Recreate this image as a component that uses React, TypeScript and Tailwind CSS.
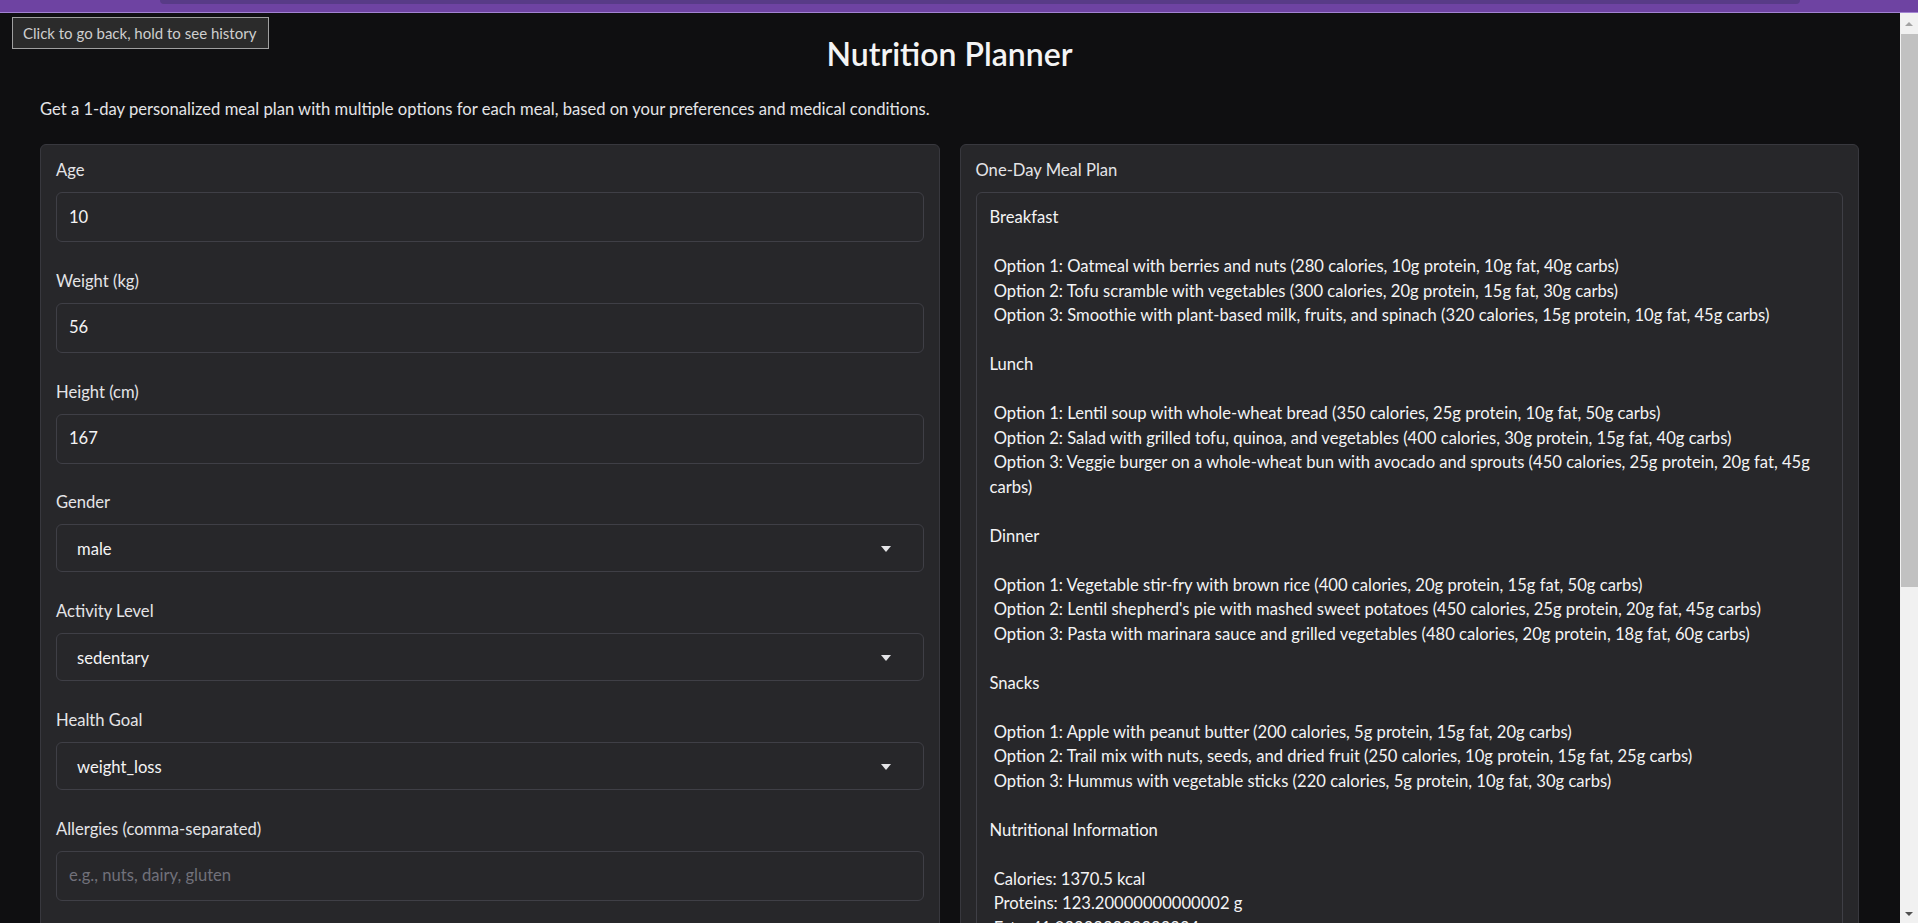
import React from 'react';

interface FieldProps {
    label: string;
    value?: string;
    placeholder?: string;
}

const mealPlanText = `Breakfast

 Option 1: Oatmeal with berries and nuts (280 calories, 10g protein, 10g fat, 40g carbs)
 Option 2: Tofu scramble with vegetables (300 calories, 20g protein, 15g fat, 30g carbs)
 Option 3: Smoothie with plant-based milk, fruits, and spinach (320 calories, 15g protein, 10g fat, 45g carbs)

Lunch

 Option 1: Lentil soup with whole-wheat bread (350 calories, 25g protein, 10g fat, 50g carbs)
 Option 2: Salad with grilled tofu, quinoa, and vegetables (400 calories, 30g protein, 15g fat, 40g carbs)
 Option 3: Veggie burger on a whole-wheat bun with avocado and sprouts (450 calories, 25g protein, 20g fat, 45g carbs)

Dinner

 Option 1: Vegetable stir-fry with brown rice (400 calories, 20g protein, 15g fat, 50g carbs)
 Option 2: Lentil shepherd's pie with mashed sweet potatoes (450 calories, 25g protein, 20g fat, 45g carbs)
 Option 3: Pasta with marinara sauce and grilled vegetables (480 calories, 20g protein, 18g fat, 60g carbs)

Snacks

 Option 1: Apple with peanut butter (200 calories, 5g protein, 15g fat, 20g carbs)
 Option 2: Trail mix with nuts, seeds, and dried fruit (250 calories, 10g protein, 15g fat, 25g carbs)
 Option 3: Hummus with vegetable sticks (220 calories, 5g protein, 10g fat, 30g carbs)

Nutritional Information

 Calories: 1370.5 kcal
 Proteins: 123.20000000000002 g
 Fats: 41.099999999999994 g
 Carbohydrates: 145.3 g`;

// plain text box (number / text inputs)
const TextField: React.FC<FieldProps> = ({ label, value, placeholder }) => (
    <div>
        <p className="text-[16.6px] leading-5 text-[#e4e4e7] mb-3">{label}</p>
        <div className="h-[50px] rounded-md border border-[#3f3f46] bg-[#27272a] px-3 flex items-center text-[16.6px]">
            {value ? (
                <span className="text-[#f4f4f5]">{value}</span>
            ) : (
                <span className="text-[#71717a]">{placeholder}</span>
            )}
        </div>
    </div>
);

const SelectField: React.FC<FieldProps> = ({ label, value }) => (
    <div>
        <p className="text-[16.6px] leading-5 text-[#e4e4e7] mb-3">{label}</p>
        <div className="h-[48px] rounded-md border border-[#3f3f46] bg-[#27272a] pl-5 pr-[32px] pt-[2px] flex items-center justify-between text-[16.6px]">
            <span className="text-[#f4f4f5]">{value}</span>
            <span className="w-0 h-0 border-l-[5px] border-r-[5px] border-t-[6px] border-l-transparent border-r-transparent border-t-[#e4e4e7]" />
        </div>
    </div>
);

const Scrollbar: React.FC = () => (
    <div className="w-[18px] flex flex-col bg-[#f1f1f1]">
        <div className="h-[21px] flex items-center justify-center">
            <span className="w-0 h-0 border-l-[4px] border-r-[4px] border-b-[4px] border-l-transparent border-r-transparent border-b-[#a3a3a3]" />
        </div>
        <div className="h-[553px] ml-[1px] bg-[#c1c1c1]" />
        <div className="flex-1" />
        <div className="h-[18px] flex items-center justify-center">
            <span className="w-0 h-0 border-l-[4px] border-r-[4px] border-t-[4px] border-l-transparent border-r-transparent border-t-[#505050]" />
        </div>
    </div>
);

export default function App() {
    return (
        <div className="h-screen w-full overflow-hidden flex flex-col bg-[#0f0f11] font-['Lato',sans-serif]">
            {/* browser strip */}
            <div className="relative h-[13px] shrink-0 bg-[#6e43a2] border-b border-[#a283d2]">
                <div className="absolute left-[160px] right-[118px] top-0 h-[4px] rounded-b-lg bg-[#583b87]" />
            </div>

            <div className="flex flex-1 min-h-0">
                <main className="relative flex-1 overflow-hidden pl-10 pr-[41px] pt-[21px]">
                    <div className="absolute left-3 top-[4px] h-[32px] w-[257px] border border-[#a0a0a0] bg-[#2b2b2b] flex items-center px-[10px] text-[15px] text-[#cfcfcf] whitespace-nowrap">
                        Click to go back, hold to see history
                    </div>

                    <h1 className="text-center text-[32px] leading-10 font-semibold text-[#f4f4f5]">Nutrition Planner</h1>

                    <p className="mt-[23px] text-[16.6px] leading-6 text-[#e4e4e7]">
                        Get a 1-day personalized meal plan with multiple options for each meal, based on your preferences and medical conditions.
                    </p>

                    <div className="mt-[23px] grid grid-cols-2 gap-5 items-start">
                        <div className="rounded-md border border-[#38383e] bg-[#27272a] p-[15px] flex flex-col gap-[28.8px]">
                            <TextField label="Age" value="10" />
                            <TextField label="Weight (kg)" value="56" />
                            <TextField label="Height (cm)" value="167" />
                            <SelectField label="Gender" value="male" />
                            <SelectField label="Activity Level" value="sedentary" />
                            <SelectField label="Health Goal" value="weight_loss" />
                            <TextField label="Allergies (comma-separated)" placeholder="e.g., nuts, dairy, gluten" />
                            <TextField label="Medical Conditions (comma-separated)" placeholder="e.g., diabetes, hypertension" />
                        </div>

                        <div className="rounded-md border border-[#38383e] bg-[#27272a] p-[15px]">
                            <p className="text-[16.6px] leading-5 text-[#e4e4e7] mb-3">One-Day Meal Plan</p>
                            <div className="rounded-md border border-[#3f3f46] bg-[#27272a] px-[13px] pt-3 pb-3 whitespace-pre-wrap text-[16.6px] leading-[24.5px] text-[#f4f4f5]">
                                {mealPlanText}
                            </div>
                        </div>
                    </div>
                </main>
                <Scrollbar />
            </div>
        </div>
    );
}
